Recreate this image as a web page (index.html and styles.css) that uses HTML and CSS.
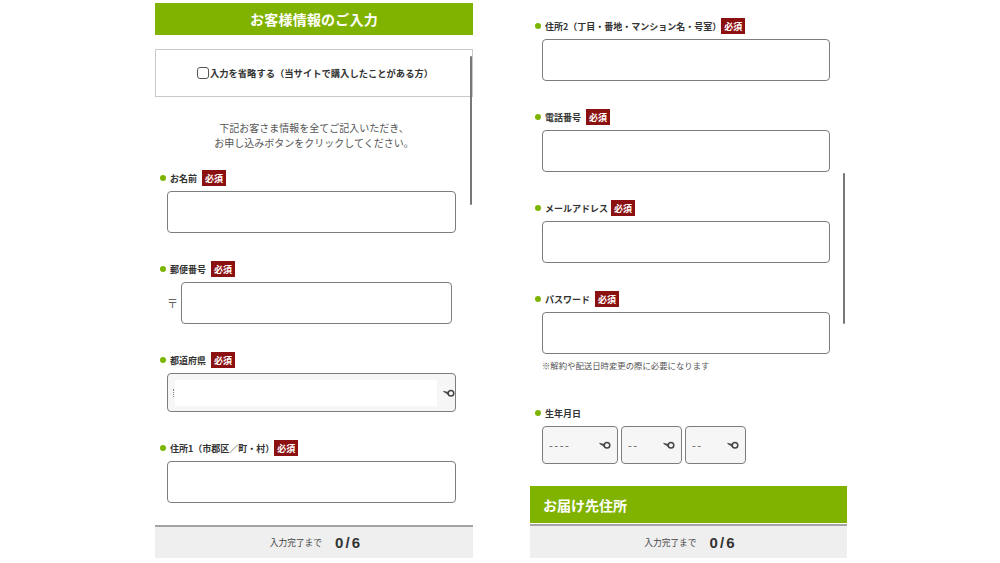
FILE: index.html
```html
<!DOCTYPE html>
<html lang="ja">
<head>
<meta charset="utf-8">
<title>お客様情報のご入力</title>
<link rel="stylesheet" href="styles.css">
</head>
<body>
<div class="page">
  <section class="panel panel-left">
    <div class="title-bar">お客様情報のご入力</div>
    <div class="skip"><span class="check"></span>入力を省略する（当サイトで購入したことがある方）</div>
    <p class="intro">下記お客さま情報を全てご記入いただき、<br>お申し込みボタンをクリックしてください。</p>

    <div class="field">
      <div class="label"><span class="dot"></span>お名前<span class="req">必須</span></div>
      <div class="input"></div>
    </div>
    <div class="field">
      <div class="label"><span class="dot"></span>郵便番号<span class="req">必須</span></div>
      <div class="postal"><span class="zip">〒</span><div class="input input-postal"></div></div>
    </div>
    <div class="field">
      <div class="label"><span class="dot"></span>都道府県<span class="req">必須</span></div>
      <div class="select-pref">
        <span class="dots"></span>
        <span class="pref-inner"></span>
        <svg class="arrow" width="12" height="10" viewBox="0 0 12 10"><path d="M0.6 3.4 L5 4.4 L5 6.2 Z" fill="#444" stroke="#444" stroke-width="0.9" stroke-linejoin="round"/><circle cx="8" cy="5.2" r="2.8" fill="none" stroke="#444" stroke-width="1.5"/></svg>
      </div>
    </div>
    <div class="field field-last">
      <div class="label"><span class="dot"></span>住所1（市郡区／町・村）<span class="req req-wide">必須</span></div>
      <div class="input"></div>
    </div>

    <div class="progress"><span class="progress-label">入力完了まで</span><span class="progress-count">0 / 6</span></div>
    <span class="scrollbar scrollbar-left"></span>
  </section>

  <section class="panel panel-right">
    <div class="field">
      <div class="label"><span class="dot"></span>住所2（丁目・番地・マンション名・号室）<span class="req req-wide">必須</span></div>
      <div class="input"></div>
    </div>
    <div class="field">
      <div class="label"><span class="dot"></span>電話番号<span class="req">必須</span></div>
      <div class="input"></div>
    </div>
    <div class="field">
      <div class="label"><span class="dot"></span>メールアドレス<span class="req req-tight">必須</span></div>
      <div class="input"></div>
    </div>
    <div class="field">
      <div class="label"><span class="dot"></span>パスワード<span class="req">必須</span></div>
      <div class="input"></div>
    </div>
    <p class="note">※解約や配送日時変更の際に必要になります</p>

    <div class="field field-birth">
      <div class="label"><span class="dot"></span>生年月日</div>
      <div class="birth">
        <div class="sel sel-year"><span>----</span><svg class="arrow" width="12" height="10" viewBox="0 0 12 10"><path d="M0.6 3.4 L5 4.4 L5 6.2 Z" fill="#444" stroke="#444" stroke-width="0.9" stroke-linejoin="round"/><circle cx="8" cy="5.2" r="2.8" fill="none" stroke="#444" stroke-width="1.5"/></svg></div>
        <div class="sel"><span>--</span><svg class="arrow" width="12" height="10" viewBox="0 0 12 10"><path d="M0.6 3.4 L5 4.4 L5 6.2 Z" fill="#444" stroke="#444" stroke-width="0.9" stroke-linejoin="round"/><circle cx="8" cy="5.2" r="2.8" fill="none" stroke="#444" stroke-width="1.5"/></svg></div>
        <div class="sel"><span>--</span><svg class="arrow" width="12" height="10" viewBox="0 0 12 10"><path d="M0.6 3.4 L5 4.4 L5 6.2 Z" fill="#444" stroke="#444" stroke-width="0.9" stroke-linejoin="round"/><circle cx="8" cy="5.2" r="2.8" fill="none" stroke="#444" stroke-width="1.5"/></svg></div>
      </div>
    </div>

    <div class="section-bar">お届け先住所</div>
    <div class="progress progress-right"><span class="progress-label">入力完了まで</span><span class="progress-count">0 / 6</span></div>
    <span class="scrollbar scrollbar-right"></span>
  </section>
</div>
</body>
</html>
```

FILE: styles.css
```css
* { box-sizing: border-box; }
html, body {
  margin: 0;
  padding: 0;
  width: 1000px;
  height: 563px;
  overflow: hidden;
  background: #fff;
  font-family: "Noto Sans CJK JP", "Noto Sans", sans-serif;
  color: #333;
}
.page {
  display: flex;
  gap: 57px;
  padding-left: 155px;
}
.panel {
  position: relative;
  display: flex;
  flex-direction: column;
  height: 558px;
}
.panel > * { flex-shrink: 0; }
.panel-left { width: 318px; padding-top: 3px; }
.panel-right { width: 317px; padding-top: 18px; }

.title-bar {
  height: 32px;
  background: #80b300;
  color: #fff;
  font-size: 14px;
  font-weight: 700;
  display: flex;
  align-items: center;
  justify-content: center;
  letter-spacing: 0.2px;
}
.skip {
  margin-top: 14px;
  height: 48px;
  border: 1px solid #c9c9c9;
  display: flex;
  align-items: center;
  justify-content: center;
  font-size: 9.3px;
  font-weight: 700;
  color: #333;
  padding-left: 2px;
}
.check {
  width: 12px;
  height: 12px;
  border: 1.3px solid #555;
  border-radius: 3px;
  margin-right: 1px;
  background: #fff;
}
.intro {
  margin: 23px 0 0;
  text-align: center;
  font-size: 10px;
  line-height: 15px;
  color: #555;
}
.intro + .field { margin-top: 20px; }

.field { margin-bottom: 28px; }
.field-last { margin-bottom: 0; }
.label {
  height: 16px;
  display: flex;
  align-items: center;
  padding-left: 5px;
  font-size: 9px;
  font-weight: 700;
  color: #333;
  margin-bottom: 5px;
}
.dot {
  width: 6px;
  height: 6px;
  border-radius: 50%;
  background: #7cb500;
  margin-right: 4px;
  flex: none;
}
.req {
  height: 16px;
  padding: 0 3px;
  margin-left: 5px;
  background: #8b1111;
  color: #fff;
  font-size: 9px;
  font-weight: 700;
  display: flex;
  align-items: center;
}
.req-wide { margin-left: 0; }
.req-tight { margin-left: 3px; }

.input {
  margin-left: 12px;
  width: 289px;
  height: 42px;
  border: 1px solid #7d7d7d;
  border-radius: 4px;
  background: #fff;
}
.panel-right .input { width: 288px; }

.postal {
  display: flex;
  align-items: center;
  padding-left: 12px;
}
.zip {
  width: 14px;
  font-size: 11px;
  color: #666;
  text-align: left;
}
.input-postal { margin-left: 0; width: 271px; }

.select-pref {
  margin-left: 12px;
  width: 289px;
  height: 39px;
  border: 1px solid #7d7d7d;
  border-radius: 4px;
  background: #f6f6f6;
  display: flex;
  align-items: center;
  padding-left: 5px;
}
.dots {
  width: 1px;
  height: 8px;
  border-left: 1px dotted #888;
  margin-right: 1px;
}
.pref-inner {
  width: 263px;
  height: 26px;
  background: #fff;
}
.select-pref .arrow { margin-left: 6px; }

.note {
  margin: -23px 0 0 12px;
  font-size: 8.4px;
  line-height: 12px;
  color: #555;
}
.field-birth { margin-top: 34px; margin-bottom: 22px; }
.birth {
  display: flex;
  gap: 3px;
  padding-left: 12px;
}
.sel {
  width: 61px;
  height: 38px;
  border: 1px solid #7d7d7d;
  border-radius: 4px;
  background: #f6f6f6;
  display: flex;
  align-items: center;
  justify-content: space-between;
  padding: 0 6px 0 6px;
  font-size: 11px;
  letter-spacing: 1.5px;
  color: #555;
}
.sel-year { width: 76px; }

.section-bar {
  height: 37px;
  background: #80b300;
  color: #fff;
  font-size: 14px;
  font-weight: 700;
  display: flex;
  align-items: center;
  padding-left: 13px;
}

.progress {
  margin-top: auto;
  height: 33px;
  border-top: 2px solid #a3a3a3;
  background: #efefef;
  display: flex;
  align-items: center;
  justify-content: center;
  gap: 13px;
  padding-left: 2px;
}
.progress-right { margin-top: 1px; height: 34px; }
.progress-label { font-size: 8.7px; color: #444; }
.progress-count {
  font-family: "Liberation Sans", Arial, sans-serif;
  font-size: 15px;
  font-weight: 700;
  color: #333;
  word-spacing: -2px;
}

.scrollbar {
  position: absolute;
  width: 2px;
  border-radius: 1px;
  background: #777;
}
.scrollbar-left { left: 315px; top: 56px; height: 149px; }
.scrollbar-right { left: 313px; top: 173px; height: 151px; }
```
